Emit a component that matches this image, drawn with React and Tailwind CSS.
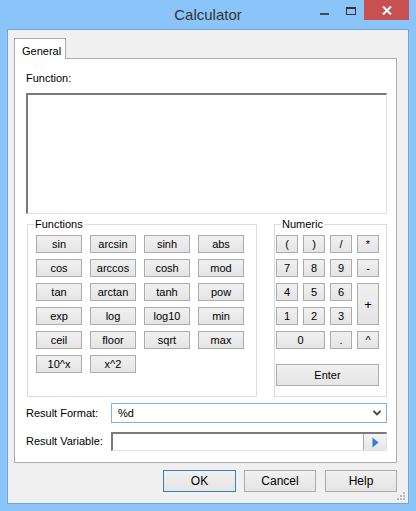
import React from "react";

const Btn = ({ children, className = "" }) => (
  <button
    className={`flex items-center justify-center border border-[#acacac] bg-linear-to-b from-[#f0f0f0] to-[#e5e5e5] text-[11px] leading-none text-black ${className}`}
  >
    {children}
  </button>
);

const funcs = [
  "sin", "arcsin", "sinh", "abs",
  "cos", "arccos", "cosh", "mod",
  "tan", "arctan", "tanh", "pow",
  "exp", "log", "log10", "min",
  "ceil", "floor", "sqrt", "max",
  "10^x", "x^2",
];

const Grip = () => (
  <svg width="8" height="8" viewBox="0 0 8 8" className="absolute right-[3px] bottom-[3px]">
    {[
      [6, 0], [6, 3], [3, 3], [6, 6], [3, 6], [0, 6],
    ].map(([x, y]) => (
      <rect key={`${x}-${y}`} x={x} y={y} width="2" height="2" fill="#b8b8b8" />
    ))}
  </svg>
);

export default function App() {
  return (
    <div className="w-[416px] h-[511px] bg-[#8bc4f8] flex flex-col font-['Liberation_Sans',Arial,sans-serif] text-black select-none">
      {/* title bar */}
      <div className="h-[29px] relative flex items-center justify-center">
        <span className="text-[15px] text-[#333] mt-[1px]">Calculator</span>
        {/* minimize */}
        <div className="absolute left-[320px] top-[13px] w-[9px] h-[2px] bg-[#4a4a4a]" />
        {/* maximize */}
        <div className="absolute left-[346px] top-[7px] w-[10px] h-[8px] border border-t-2 border-[#333]" />
        {/* close */}
        <div className="absolute right-[7px] top-0 w-[45px] h-[20px] bg-[#c75050] flex items-center justify-center">
          <svg width="10" height="9" viewBox="0 0 10 9">
            <path d="M1 0.5 L9 8.5 M9 0.5 L1 8.5" stroke="#fff" strokeWidth="2" />
          </svg>
        </div>
      </div>

      {/* dialog body */}
      <div className="relative mx-[7px] mb-[7px] flex-1 border border-[#6fa5d8] bg-[#f0f0f0] flex flex-col">
        {/* tab header */}
        <div className="pt-[8px] pl-[6px] flex">
          <div className="relative z-10 w-[52px] h-[21px] -mb-[1px] border border-b-0 border-[#adadad] bg-white text-[11px] pl-[7px] pt-[4px]">
            General
          </div>
        </div>

        {/* tab panel */}
        <div className="ml-[6px] w-[383px] h-[405px] border border-[#adadad] bg-white flex flex-col">
          <div className="pl-[11px] pt-[13px] text-[11px] leading-[13px]">Function:</div>
          <div className="ml-[11px] mt-[8px] w-[361px] h-[121px] border border-t-2 border-l-2 border-t-[#7a7a7a] border-l-[#7a7a7a] border-r-[#e3e3e3] border-b-[#e3e3e3] bg-white" />

          {/* groups */}
          <div className="flex pl-[12px] mt-[4px] gap-[17px]">
            <fieldset className="w-[230px] h-[179px] border border-[#dcdcdc] px-[8px]">
              <legend className="ml-[-2px] px-[1px] text-[11px] leading-[13px]">Functions</legend>
              <div className="grid grid-cols-[46px_46px_46px_46px] gap-x-[8px] gap-y-[6px] mt-[4px]">
                {funcs.map((f) => (
                  <Btn key={f} className="w-[46px] h-[18px]">{f}</Btn>
                ))}
              </div>
            </fieldset>

            <fieldset className="w-[113px] h-[179px] border border-[#dcdcdc] px-[1px]">
              <legend className="ml-[5px] px-[1px] text-[11px] leading-[13px]">Numeric</legend>
              <div className="grid grid-cols-[22px_22px_22px_22px] grid-rows-[18px_18px_18px_18px_18px] gap-x-[5px] gap-y-[6px] mt-[4px]">
                <Btn>(</Btn>
                <Btn>)</Btn>
                <Btn>/</Btn>
                <Btn>*</Btn>
                <Btn>7</Btn>
                <Btn>8</Btn>
                <Btn>9</Btn>
                <Btn>-</Btn>
                <Btn>4</Btn>
                <Btn>5</Btn>
                <Btn>6</Btn>
                <Btn className="row-span-2 text-[13px]">+</Btn>
                <Btn>1</Btn>
                <Btn>2</Btn>
                <Btn>3</Btn>
                <Btn className="col-span-2">0</Btn>
                <Btn>.</Btn>
                <Btn>^</Btn>
              </div>
              <Btn className="mt-[15px] w-[103px] h-[22px]">Enter</Btn>
            </fieldset>
          </div>

          {/* result format */}
          <div className="flex items-center pl-[11px] mt-[6px]">
            <span className="w-[85px] text-[11px]">Result Format:</span>
            <div className="w-[276px] h-[20px] border border-[#7eb4ea] bg-white flex items-center justify-between pl-[6px] pr-[5px] text-[11px]">
              <span>%d</span>
              <svg width="8" height="6" viewBox="0 0 8 6">
                <path d="M0.5 1 L4 4.5 L7.5 1" fill="none" stroke="#444" strokeWidth="1.8" />
              </svg>
            </div>
          </div>

          {/* result variable */}
          <div className="flex items-center pl-[11px] mt-[9px]">
            <span className="w-[85px] text-[11px]">Result Variable:</span>
            <div className="w-[276px] h-[19px] border border-t-2 border-l-2 border-t-[#7a7a7a] border-l-[#7a7a7a] border-r-[#e3e3e3] border-b-[#e3e3e3] bg-white flex justify-end">
              <div className="w-[23px] h-full border-l border-[#acacac] bg-linear-to-b from-[#f4f4f4] to-[#e6e6e6] flex items-center justify-center">
                <svg width="7" height="11" viewBox="0 0 7 11">
                  <path d="M0.5 0.5 L6.5 5.5 L0.5 10.5 Z" fill="#2f7de1" />
                </svg>
              </div>
            </div>
          </div>
        </div>

        {/* dialog buttons */}
        <div className="flex justify-end pr-[11px] mt-[7px]">
          <button className="w-[73px] h-[22px] border border-[#3c7fb1] bg-linear-to-b from-[#f0f0f0] to-[#e5e5e5] text-[12px]">OK</button>
          <button className="ml-[8px] w-[72px] h-[22px] border border-[#acacac] bg-linear-to-b from-[#f0f0f0] to-[#e5e5e5] text-[12px]">Cancel</button>
          <button className="ml-[9px] w-[72px] h-[22px] border border-[#acacac] bg-linear-to-b from-[#f0f0f0] to-[#e5e5e5] text-[12px]">Help</button>
        </div>

        <Grip />
      </div>
    </div>
  );
}
